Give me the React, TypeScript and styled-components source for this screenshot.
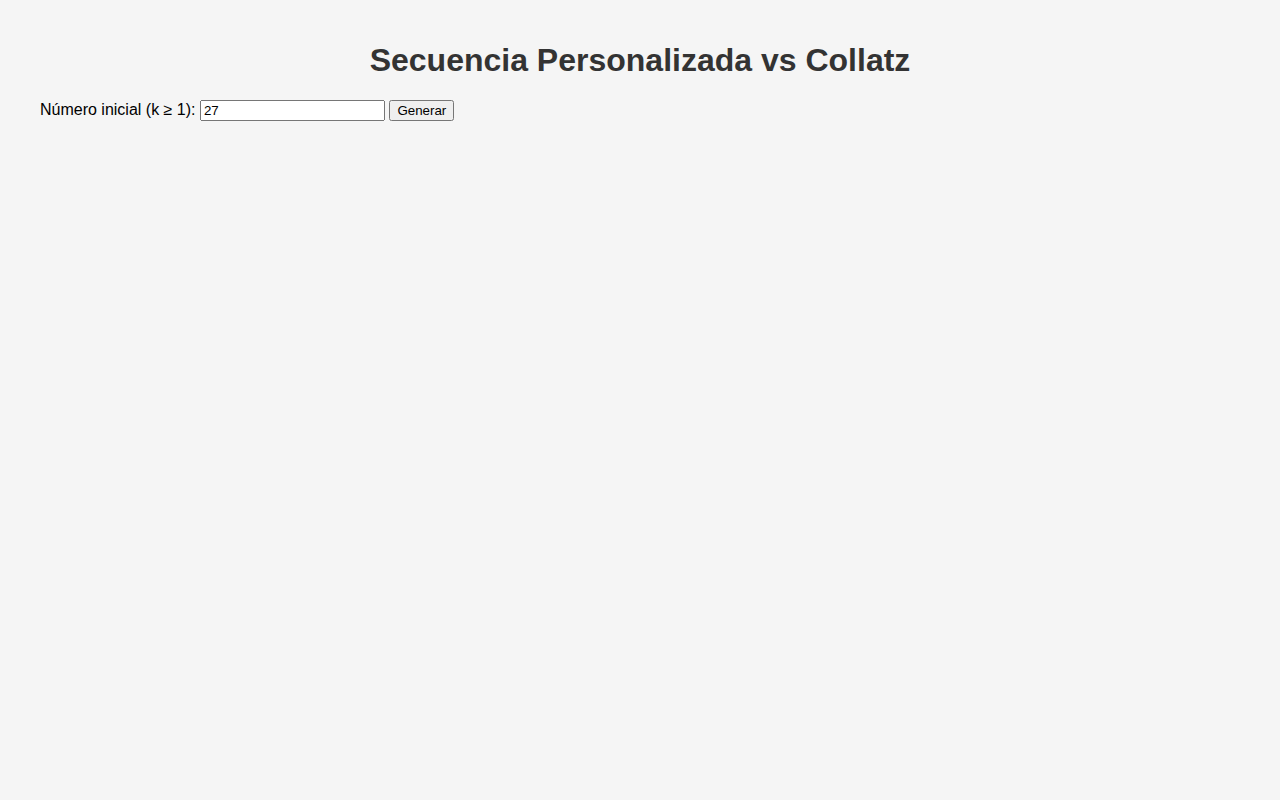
import { useState } from "react";
import { styled, createGlobalStyle } from "styled-components";

const GlobalStyle = createGlobalStyle`
body {
    margin: 0;
    padding: 42px 40px 40px;
    background-color: #f5f5f5;
    font-family: "Liberation Sans", Arial, sans-serif;
}
`

const Title = styled.h1`
    text-align: center;
    color: #333;
    font-size: 32px;
    margin: 0 0 0.67em;
`

const Controls = styled.div`
    font-size: 16px;
    color: #000;
`

const NumberInput = styled.input`
    font-family: "Liberation Sans", Arial, sans-serif;
`

const GenerateButton = styled.button`
    font-family: "Liberation Sans", Arial, sans-serif;
`

const App = () => {
    const [k, setK] = useState("27");

    return (
        <>
            <GlobalStyle />
            <Title>Secuencia Personalizada vs Collatz</Title>
            <Controls>
                <label htmlFor="k">Número inicial (k ≥ 1): </label>
                <NumberInput id="k" type="text" value={k} onChange={e => setK(e.target.value)} />{" "}
                <GenerateButton>Generar</GenerateButton>
            </Controls>
        </>
    )
}

export default App
